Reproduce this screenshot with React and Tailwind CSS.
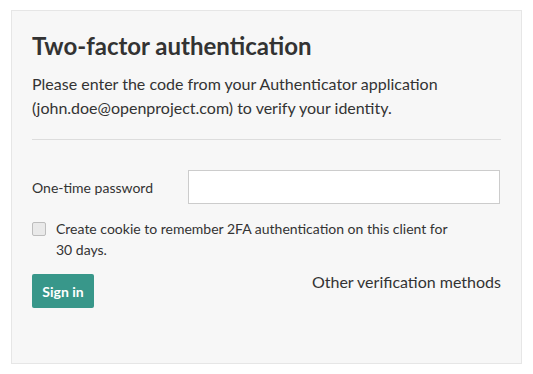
export default function App() {
  return (
    <div className="w-[533px] h-[374px] bg-white pt-[10px] pl-[11px]" style={{ fontFamily: "Lato, 'Open Sans', sans-serif" }}>
      <div className="w-[511px] h-[354px] border border-[#e6e6e6] bg-[#f7f7f7] px-[20px] pt-[19px]">
        <h2 className="text-[24px] leading-[32px] font-bold text-[#333]">Two-factor authentication</h2>
        <p className="mt-[10px] text-[16px] leading-[24px] text-[#333]">
          Please enter the code from your Authenticator application (john.doe@openproject.com) to verify your identity.
        </p>
        <div className="mt-[19px] border-t border-[#dddddd]" />
        <div className="mt-[30px] flex items-center">
          <label className="w-[156px] text-[14px] text-[#333]">One-time password</label>
          <input type="text" className="h-[34px] w-[312px] border border-[#cccccc] bg-white outline-none" />
        </div>
        <div className="mt-[14px] flex items-start pr-[36px]">
          <span className="mt-[4px] w-[14px] h-[14px] shrink-0 rounded-[2px] border border-[#bdbdbd] bg-[#e9e9e9]" />
          <span className="ml-[10px] text-[14px] leading-[21px] text-[#333]">
            Create cookie to remember 2FA authentication on this client for 30 days.
          </span>
        </div>
        <div className="mt-[14px] flex items-start justify-between">
          <button className="h-[34px] w-[62px] rounded-[2px] bg-[#38978a] text-white text-[14px] font-bold">Sign in</button>
          <span className="text-[16px] leading-[16px] text-[#333]">Other verification methods</span>
        </div>
      </div>
    </div>
  );
}
